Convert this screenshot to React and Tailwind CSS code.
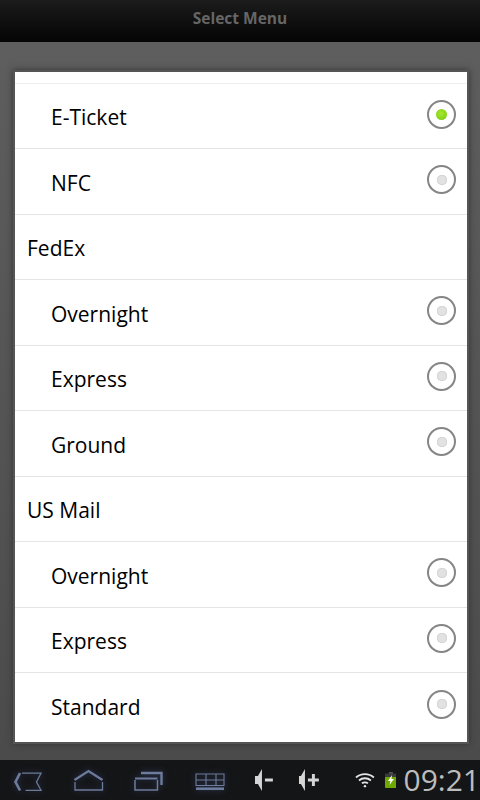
import React from 'react';

const rows = [
  { label: 'E-Ticket', radio: true, checked: true },
  { label: 'NFC', radio: true },
  { label: 'FedEx' },
  { label: 'Overnight', radio: true },
  { label: 'Express', radio: true },
  { label: 'Ground', radio: true },
  { label: 'US Mail' },
  { label: 'Overnight', radio: true },
  { label: 'Express', radio: true },
  { label: 'Standard', radio: true },
];

function Radio({ checked }) {
  return (
    <span className="flex h-[29px] w-[29px] items-center justify-center rounded-full border-2 border-[#858585] bg-white">
      <span
        className={
          checked
            ? 'h-[11px] w-[11px] rounded-full bg-[radial-gradient(circle_at_45%_40%,#a6e82e,#74c80e)]'
            : 'h-[10px] w-[10px] rounded-full bg-[#e2e2e2] shadow-[inset_0_0_1px_#999]'
        }
      />
    </span>
  );
}

function NavIcon({ children, className }) {
  return (
    <svg
      viewBox="0 0 32 24"
      fill="none"
      stroke="#6d7b9c"
      strokeWidth="1.4"
      className={`h-6 w-8 drop-shadow-[0_0_3px_#2f3b5a] ${className || ''}`}
    >
      {children}
    </svg>
  );
}

function NavBar() {
  return (
    <div className="flex h-10 items-center bg-[#141517]">
      <div className="flex items-center pl-[12px]">
        <NavIcon>
          <path d="M8 5 L3.5 14 L8 22.5" strokeWidth="2.6" />
          <path d="M10 5.2 H29 L24.5 14 L29 22.3 H13.5" strokeWidth="1.3" />
        </NavIcon>
        <NavIcon className="ml-[29px]">
          <path d="M1.5 12 L15.5 3 L29.5 12" strokeWidth="2.2" />
          <path d="M2 14 V22 H29.5 V14" strokeWidth="1.3" />
        </NavIcon>
        <NavIcon className="ml-[29px]">
          <path d="M7 5 H27.5 V17" strokeWidth="2.4" />
          <path d="M1 12 V22 H23.5 V12" strokeWidth="1.5" />
          <path d="M1 10.5 H23.5" strokeWidth="2" />
        </NavIcon>
        <NavIcon className="ml-[29px]">
          <path d="M1 6 H29 V17.5 H1 Z M1 12 H29 M11 6 V17.5 M21 6 V17.5" strokeWidth="1.1" />
          <path d="M1 20.7 H29" strokeWidth="2.6" />
        </NavIcon>
      </div>
      <svg viewBox="0 0 24 24" fill="#d6d6d6" className="ml-[26px] h-[24px] w-[24px]">
        <path d="M2 8 H5 L9 1 V23 L5 16 H2 Z" />
        <rect x="12" y="10.5" width="8" height="3" />
      </svg>
      <svg viewBox="0 0 24 24" fill="#d6d6d6" className="ml-[20px] h-[24px] w-[24px]">
        <path d="M2 8 H4 L8 1 V23 L4 16 H2 Z" />
        <path d="M15 6 H18 V10.5 H22 V13.5 H18 V18 H15 V13.5 H11 V10.5 H15 Z" />
      </svg>
      <svg viewBox="0 0 20 16" fill="none" stroke="#e6e6e6" strokeWidth="1.8" className="ml-[34px] h-4 w-5">
        <path d="M1 5.5 C6 1 14 1 19 5.5" />
        <path d="M4 8.5 C7.5 5.5 12.5 5.5 16 8.5" />
        <path d="M7 11.5 C8.5 10 11.5 10 13 11.5" />
        <circle cx="10" cy="14.2" r="1.2" fill="#e6e6e6" stroke="none" />
      </svg>
      <svg viewBox="0 0 12 16" className="ml-[10px] h-4 w-3">
        <rect x="4" y="0" width="4" height="2" fill="#555" />
        <rect x="0" y="1.5" width="12" height="5" fill="#3a3a3a" />
        <rect x="0" y="5" width="12" height="11" rx="1" fill="#6fa800" />
        <path d="M7 3 L3 9 H5.5 L4.5 13 L9 7 H6.5 Z" fill="#fff" />
      </svg>
      <span className="ml-[7px] font-['Open_Sans',sans-serif] text-[30px] leading-none text-[#bdbdbd]">09:21</span>
    </div>
  );
}

export default function App() {
  return (
    <div className="flex h-[800px] w-[480px] flex-col overflow-hidden bg-[#5e5e5e] font-['Open_Sans','Noto_Sans',sans-serif]">
      <div className="flex h-[42px] items-center justify-center bg-gradient-to-b from-[#1c1c1c] to-[#050505] pb-[5px]">
        <span className="text-[15.5px] font-bold text-[#666]">Select Menu</span>
      </div>
      <div className="flex-1 bg-gradient-to-b from-[#5e5e5e] to-[#4b4b4b] pt-[28px] pr-[11px] pl-[13px]">
        <div className="h-[674px] border-2 border-[#555] bg-white pt-[10.5px] shadow-[0_0_6px_#333]">
          <div className="border-t border-[#eee]" />
          {rows.map((row, i) => (
            <div
              key={i}
              className={`flex h-[65.5px] items-center justify-between pt-[4px] pr-[11px] ${
                row.radio ? 'pl-[36px]' : 'pl-[12px]'
              } ${i < rows.length - 1 ? 'border-b border-[#e4e4e4]' : ''}`}
            >
              <span className="text-[21px] text-black">{row.label}</span>
              {row.radio && (
                <span className="-mt-[7px]">
                  <Radio checked={row.checked} />
                </span>
              )}
            </div>
          ))}
        </div>
      </div>
      <NavBar />
    </div>
  );
}
